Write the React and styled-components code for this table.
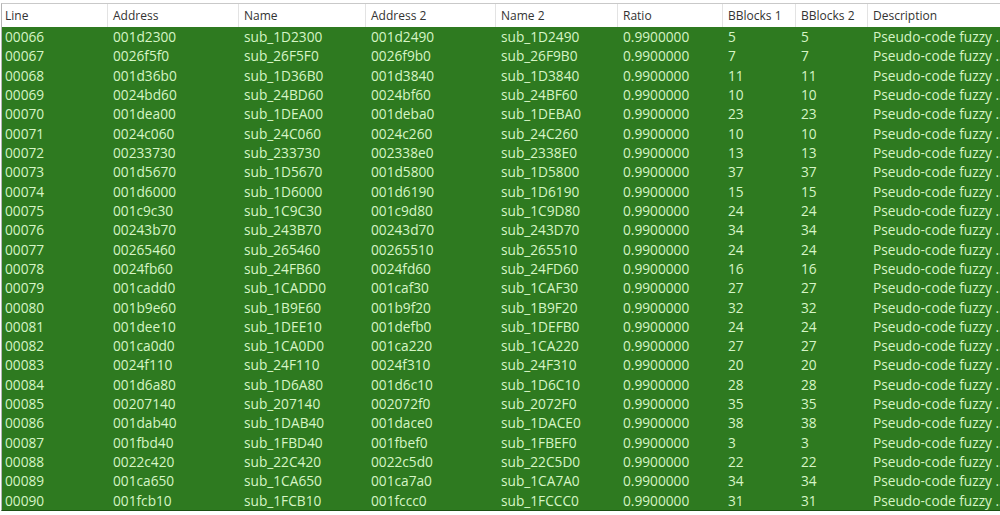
import React from "react"
import styled, { createGlobalStyle } from "styled-components"

const GlobalStyle = createGlobalStyle`
  html, body {
    margin: 0;
    padding: 0;
    background: #ffffff;
    overflow: hidden;
  }
  body {
    font-family: "Open Sans", "Noto Sans", sans-serif;
  }
`

const COLS = "106px 131px 127px 130px 122px 105px 73px 72px 1fr"

const Frame = styled.div`
  margin-top: 3px;
  margin-left: 1px;
  width: 999px;
  box-sizing: border-box;
  border-top: 1px solid #c9c9c9;
  border-left: 1px solid #b5b5b5;
  border-bottom: 1px solid #1d4f14;
`

const HeaderRow = styled.div`
  display: grid;
  grid-template-columns: ${COLS};
  height: 23px;
  background: #ffffff;
`

const HeaderCell = styled.div`
  display: flex;
  align-items: center;
  padding-left: 5px;
  font-size: 12px;
  color: #333333;
  border-right: 1px solid #e3e3e3;
  white-space: nowrap;
  overflow: hidden;
  &:first-child {
    padding-left: 3px;
  }
  &:last-child {
    border-right: none;
  }
`

const Body = styled.div`
  background: #2e7a20;
`

const Row = styled.div`
  display: grid;
  grid-template-columns: ${COLS};
  height: 19.32px;
`

const Cell = styled.div`
  display: flex;
  align-items: center;
  padding-left: 5px;
  font-size: 13.7px;
  color: #d6f5c6;
  white-space: nowrap;
  overflow: hidden;
  &:first-child {
    padding-left: 3px;
  }
`

const headers = [
  "Line",
  "Address",
  "Name",
  "Address 2",
  "Name 2",
  "Ratio",
  "BBlocks 1",
  "BBlocks 2",
  "Description",
]

const raw = `00066 001d2300 sub_1D2300 001d2490 sub_1D2490 5 5
00067 0026f5f0 sub_26F5F0 0026f9b0 sub_26F9B0 7 7
00068 001d36b0 sub_1D36B0 001d3840 sub_1D3840 11 11
00069 0024bd60 sub_24BD60 0024bf60 sub_24BF60 10 10
00070 001dea00 sub_1DEA00 001deba0 sub_1DEBA0 23 23
00071 0024c060 sub_24C060 0024c260 sub_24C260 10 10
00072 00233730 sub_233730 002338e0 sub_2338E0 13 13
00073 001d5670 sub_1D5670 001d5800 sub_1D5800 37 37
00074 001d6000 sub_1D6000 001d6190 sub_1D6190 15 15
00075 001c9c30 sub_1C9C30 001c9d80 sub_1C9D80 24 24
00076 00243b70 sub_243B70 00243d70 sub_243D70 34 34
00077 00265460 sub_265460 00265510 sub_265510 24 24
00078 0024fb60 sub_24FB60 0024fd60 sub_24FD60 16 16
00079 001cadd0 sub_1CADD0 001caf30 sub_1CAF30 27 27
00080 001b9e60 sub_1B9E60 001b9f20 sub_1B9F20 32 32
00081 001dee10 sub_1DEE10 001defb0 sub_1DEFB0 24 24
00082 001ca0d0 sub_1CA0D0 001ca220 sub_1CA220 27 27
00083 0024f110 sub_24F110 0024f310 sub_24F310 20 20
00084 001d6a80 sub_1D6A80 001d6c10 sub_1D6C10 28 28
00085 00207140 sub_207140 002072f0 sub_2072F0 35 35
00086 001dab40 sub_1DAB40 001dace0 sub_1DACE0 38 38
00087 001fbd40 sub_1FBD40 001fbef0 sub_1FBEF0 3 3
00088 0022c420 sub_22C420 0022c5d0 sub_22C5D0 22 22
00089 001ca650 sub_1CA650 001ca7a0 sub_1CA7A0 34 34
00090 001fcb10 sub_1FCB10 001fccc0 sub_1FCCC0 31 31`

const rows = raw.split("\n").map((line) => {
  const [ln, a1, n1, a2, n2, b1, b2] = line.split(" ")
  return [ln, a1, n1, a2, n2, "0.9900000", b1, b2, "Pseudo-code fuzzy ..."]
})

const App = () => {
  return (
    <>
      <GlobalStyle />
      <Frame>
        <HeaderRow>
          {headers.map((h) => (
            <HeaderCell key={h}>{h}</HeaderCell>
          ))}
        </HeaderRow>
        <Body>
          {rows.map((r) => (
            <Row key={r[0]}>
              {r.map((v, i) => (
                <Cell key={i}>{v}</Cell>
              ))}
            </Row>
          ))}
        </Body>
      </Frame>
    </>
  )
}

export default App
